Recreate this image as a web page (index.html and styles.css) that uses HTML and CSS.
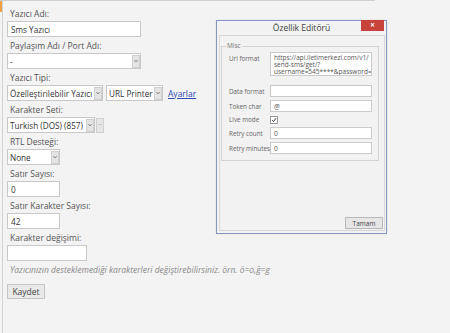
FILE: index.html
```html
<!DOCTYPE html>
<html lang="tr">

<head>
    <meta charset="UTF-8">
    <meta name="viewport" content="width=device-width, initial-scale=1.0">
    <title>Yazıcı Ayarları</title>
    <link rel="stylesheet" href="styles.css">
</head>

<body>
    <div class="topline"></div>
    <div class="page">
        <div class="rail"><div class="rail-mark"></div></div>

        <form class="form">
            <div class="field">
                <label>Yazıcı Adı:</label>
                <input class="text w-xl" type="text" value="Sms Yazıcı">
            </div>

            <div class="field">
                <label>Paylaşım Adı / Port Adı:</label>
                <div class="select w-xl"><span class="value">-</span><span class="arrow"><svg viewBox="0 0 8 8"><path d="M2 3l2 2 2-2" /></svg></span></div>
            </div>

            <div class="field">
                <label>Yazıcı Tipi:</label>
                <div class="row">
                    <div class="select w-type"><span class="value">Özelleştirilebilir Yazıcı</span><span class="arrow"><svg viewBox="0 0 8 8"><path d="M2 3l2 2 2-2" /></svg></span></div>
                    <div class="select w-url"><span class="value">URL Printer</span><span class="arrow"><svg viewBox="0 0 8 8"><path d="M2 3l2 2 2-2" /></svg></span></div>
                    <a href="#" class="link">Ayarlar</a>
                </div>
            </div>

            <div class="field">
                <label>Karakter Seti:</label>
                <div class="row tight">
                    <div class="select w-charset"><span class="value">Turkish (DOS) (857)</span><span class="arrow"><svg viewBox="0 0 8 8"><path d="M2 3l2 2 2-2" /></svg></span></div>
                    <button type="button" class="dots">...</button>
                </div>
            </div>

            <div class="field">
                <label>RTL Desteği:</label>
                <div class="select w-sm"><span class="value">None</span><span class="arrow"><svg viewBox="0 0 8 8"><path d="M2 3l2 2 2-2" /></svg></span></div>
            </div>

            <div class="field">
                <label>Satır Sayısı:</label>
                <input class="text w-sm" type="text" value="0">
            </div>

            <div class="field">
                <label>Satır Karakter Sayısı:</label>
                <input class="text w-sm" type="text" value="42">
            </div>

            <div class="field">
                <label>Karakter değişimi:</label>
                <input class="text w-md" type="text" value="">
            </div>

            <p class="hint">Yazıcınızın desteklemediği karakterleri değiştirebilirsiniz. örn. ö=o,ğ=g</p>

            <button type="button" class="button">Kaydet</button>
        </form>
    </div>

    <div class="dialog">
        <div class="dialog-title">
            Özellik Editörü
            <span class="dialog-close">×</span>
        </div>
        <div class="dialog-body">
            <fieldset class="props">
                <legend>Misc</legend>
                <div class="prop tall">
                    <span class="prop-label">Url format</span>
                    <textarea class="prop-area" wrap="off">https://api.iletimerkezi.com/v1/
send-sms/get/?
username=545****&amp;password=**</textarea>
                </div>
                <div class="prop">
                    <span class="prop-label">Data format</span>
                    <input class="prop-input" type="text" value="">
                </div>
                <div class="prop">
                    <span class="prop-label">Token char</span>
                    <input class="prop-input" type="text" value="@">
                </div>
                <div class="prop">
                    <span class="prop-label">Live mode</span>
                    <span class="check"><svg viewBox="0 0 8 8"><path d="M1.5 4.2l1.8 1.8 3.3-4.2" /></svg></span>
                </div>
                <div class="prop">
                    <span class="prop-label">Retry count</span>
                    <input class="prop-input" type="text" value="0">
                </div>
                <div class="prop">
                    <span class="prop-label">Retry minutes</span>
                    <input class="prop-input" type="text" value="0">
                </div>
            </fieldset>
            <div class="dialog-actions">
                <button type="button" class="ok">Tamam</button>
            </div>
        </div>
    </div>
</body>

</html>
```

FILE: styles.css
```css
body {
    margin: 0;
    background-color: #f3f3f3;
    font-family: 'Open Sans', 'Noto Sans', sans-serif;
    font-size: 8.5px;
    color: #555;
}

.topline {
    width: 375px;
    height: 1px;
    background-color: #cfcfcf;
}

.page {
    display: flex;
    min-height: 332px;
}

.rail {
    width: 2px;
    border-right: 1px solid #d2d2d2;
}

.rail-mark {
    height: 11px;
    background-color: #f0a040;
}

.form {
    padding: 7px 0 0 4px;
}

.field {
    margin-bottom: 3px;
}

.field label {
    display: block;
    height: 13px;
    line-height: 12px;
    padding-left: 3px;
}

.text,
.select {
    box-sizing: border-box;
    height: 16px;
    border: 1px solid #c8c8c8;
    background: white;
    font-family: inherit;
    font-size: 8.2px;
    color: #333;
}

.text {
    display: block;
    padding: 0 3px;
    margin: 0;
    outline: none;
}

.select {
    display: flex;
    align-items: center;
}

.select .value {
    flex: 1;
    padding-left: 2px;
    white-space: nowrap;
    overflow: hidden;
}

.select .arrow {
    flex: none;
    box-sizing: border-box;
    width: 8px;
    height: 13px;
    margin-right: 0;
    background-color: #e4e4e4;
    border: 1px solid #d0d0d0;
    display: flex;
    align-items: center;
    justify-content: center;
}

.select .arrow svg {
    width: 6px;
    height: 6px;
    fill: none;
    stroke: #666;
    stroke-width: 1.3;
}

.w-xl {
    width: 134px;
}

.w-type {
    width: 96px;
}

.w-url {
    width: 57px;
}

.w-charset {
    width: 88px;
}

.w-md {
    width: 80px;
}

.w-sm {
    width: 53px;
}

.row {
    display: flex;
    align-items: center;
    gap: 3px;
}

.row.tight {
    gap: 1px;
}

.link {
    margin-left: 2px;
    color: #3048b8;
    text-decoration: underline;
}

.dots {
    box-sizing: border-box;
    width: 8px;
    height: 15px;
    padding: 0 0 4px;
    border: 1px solid #cfcfcf;
    background-color: #e6e6e6;
    color: #888;
    font-family: inherit;
    font-size: 6px;
    letter-spacing: -0.5px;
}

.hint {
    margin: 3px 0 0 3px;
    font-style: italic;
    color: #8a8a8a;
    line-height: 12px;
}

.button {
    margin-top: 8px;
    box-sizing: border-box;
    width: 38px;
    height: 15px;
    padding: 0;
    border: 1px solid #c6c6c6;
    background-color: #e9e9e9;
    font-family: inherit;
    font-size: 8.5px;
    color: #444;
}

.dialog {
    position: absolute;
    left: 216px;
    top: 20px;
    width: 171px;
    height: 214px;
    box-sizing: border-box;
    border: 1px solid #8797c0;
    background-color: #f2f2f2;
    display: flex;
    flex-direction: column;
    box-shadow: 0 0 2px rgba(0, 0, 0, 0.1);
}

.dialog-title {
    position: relative;
    height: 14px;
    line-height: 14px;
    text-align: center;
    font-size: 8.5px;
    color: #444;
}

.dialog-close {
    position: absolute;
    right: 2px;
    top: -1px;
    width: 23px;
    height: 11px;
    line-height: 10px;
    background-color: #c7433b;
    color: white;
    font-size: 8px;
    font-weight: bold;
}

.dialog-body {
    flex: 1;
    margin: 0 1px 2px 2px;
    border: 1px solid #d8d8d8;
    padding: 7px 5px 1px 1px;
    display: flex;
    flex-direction: column;
    font-size: 6.5px;
}

.props {
    margin: 0;
    padding: 3px 3px 6px 1px;
    border: 1px solid #d4d4d4;
    display: flex;
    flex-direction: column;
    gap: 3px;
}

.props legend {
    padding: 0 1px;
    margin-left: 3px;
    color: #777;
    font-size: 6.5px;
    line-height: 6px;
}

.prop {
    display: flex;
    align-items: center;
}

.prop.tall {
    align-items: flex-start;
    margin-bottom: 6px;
}

.prop-label {
    width: 41px;
    padding-left: 6px;
    color: #666;
    font-size: 6.3px;
    white-space: nowrap;
}

.prop.tall .prop-label {
    padding-top: 2px;
}

.prop-input,
.prop-area {
    box-sizing: border-box;
    width: 102px;
    height: 12px;
    margin: 0;
    padding: 0 3px;
    border: 1px solid #cacaca;
    background: white;
    font-family: inherit;
    font-size: 6.5px;
    color: #555;
    outline: none;
}

.prop-area {
    height: 24px;
    padding: 1px 3px;
    line-height: 7px;
    resize: none;
    overflow: hidden;
}

.check {
    box-sizing: border-box;
    width: 8px;
    height: 8px;
    border: 1px solid #9a9a9a;
    background: white;
    display: flex;
}

.check svg {
    width: 6px;
    height: 6px;
    fill: none;
    stroke: #333;
    stroke-width: 1.3;
}

.dialog-actions {
    margin-top: auto;
    display: flex;
    justify-content: flex-end;
    margin-right: -4px;
}

.ok {
    box-sizing: border-box;
    width: 38px;
    height: 12px;
    padding: 0;
    border: 1px solid #b9b9b9;
    background-color: #e6e6e6;
    font-family: inherit;
    font-size: 6.5px;
    color: #444;
}
```
